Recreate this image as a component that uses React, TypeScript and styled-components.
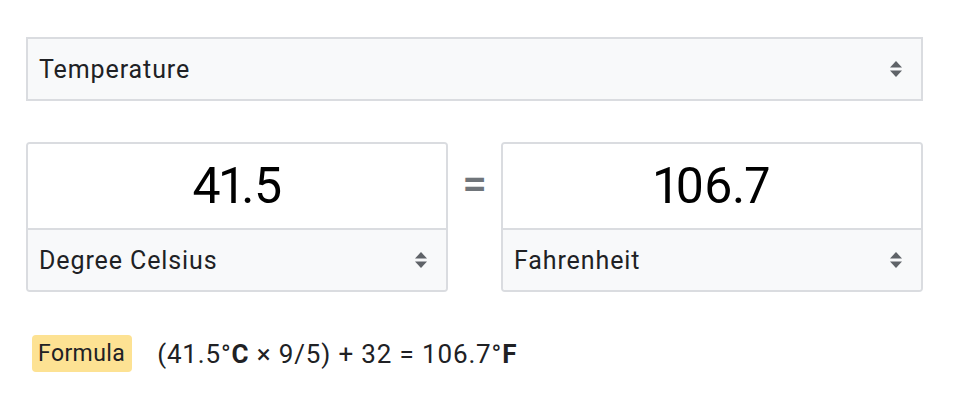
import React, { useState } from "react";
import styled, { createGlobalStyle } from "styled-components";

const GlobalStyle = createGlobalStyle`
	html, body {
		margin: 0;
		padding: 0;
		background: #ffffff;
	}
	body {
		font-family: Roboto, "Liberation Sans", Arial, sans-serif;
		color: #202124;
	}
`;

function SortArrows() {
	return (
		<ArrowIcon width="14" height="22" viewBox="0 0 14 22" aria-hidden>
			<path d="M7 3 L13 9.5 H1 Z" fill="#5f6368" />
			<path d="M7 19 L13 12.5 H1 Z" fill="#5f6368" />
		</ArrowIcon>
	);
}

function App() {
	const [celsius] = useState(41.5);
	const fahrenheit = Math.round((celsius * 9) / 5 * 10 + 320) / 10;

	return (
		<Page>
			<GlobalStyle />
			<SelectBox $square>
				<SelectLabel>Temperature</SelectLabel>
				<SortArrows />
			</SelectBox>
			<ConvertRow>
				<UnitCard>
					<ValueField>{celsius}</ValueField>
					<SelectBox>
						<SelectLabel>Degree Celsius</SelectLabel>
						<SortArrows />
					</SelectBox>
				</UnitCard>
				<Equals>=</Equals>
				<UnitCard>
					<ValueField>{fahrenheit}</ValueField>
					<SelectBox>
						<SelectLabel>Fahrenheit</SelectLabel>
						<SortArrows />
					</SelectBox>
				</UnitCard>
			</ConvertRow>
			<FormulaRow>
				<Badge>Formula</Badge>
				<FormulaText>
					({celsius}°<b>C</b> × 9/5) + 32 = {fahrenheit}°<b>F</b>
				</FormulaText>
			</FormulaRow>
		</Page>
	);
}

const Page = styled.div`
	width: 897px;
	padding: 37px 0 0 26px;
	display: flex;
	flex-direction: column;
`;

const SelectBox = styled.div<{ $square?: boolean }>`
	height: 64px;
	box-sizing: border-box;
	background: #f8f9fa;
	border: ${(p) => (p.$square ? "2px solid #dadce0" : "none")};
	display: flex;
	align-items: center;
	justify-content: space-between;
	padding: 0 18px 0 11px;
`;

const SelectLabel = styled.span`
	font-size: 25px;
	letter-spacing: 0.9px;
	color: #202124;
`;

const ArrowIcon = styled.svg`
	display: block;
`;

const ConvertRow = styled.div`
	margin-top: 41px;
	display: flex;
	align-items: stretch;
`;

const UnitCard = styled.div`
	flex: 1;
	border: 2px solid #dadce0;
	border-radius: 4px;
	overflow: hidden;
	display: flex;
	flex-direction: column;

	${SelectBox} {
		height: 62px;
		border-top: 2px solid #dadce0;
	}
`;

const ValueField = styled.div`
	height: 84px;
	display: flex;
	align-items: center;
	justify-content: center;
	font-size: 50px;
	font-variant-numeric: proportional-nums;
	letter-spacing: -0.5px;
	color: #000000;
	background: #ffffff;
`;

const Equals = styled.div`
	width: 53px;
	flex: none;
	text-align: center;
	font-size: 44px;
	font-weight: 500;
	line-height: 1;
	padding-top: 20px;
	color: #70757a;
`;

const FormulaRow = styled.div`
	margin-top: 43px;
	padding-left: 6px;
	display: flex;
	align-items: center;
	gap: 25px;
`;

const Badge = styled.span`
	background: #fde293;
	border-radius: 4px;
	padding: 5px 7px 5px 6px;
	font-size: 23px;
	letter-spacing: 0.4px;
	color: #202124;
`;

const FormulaText = styled.span`
	font-size: 26px;
	letter-spacing: 0.85px;
	color: #202124;

	b {
		font-weight: 700;
	}
`;

export default App;
